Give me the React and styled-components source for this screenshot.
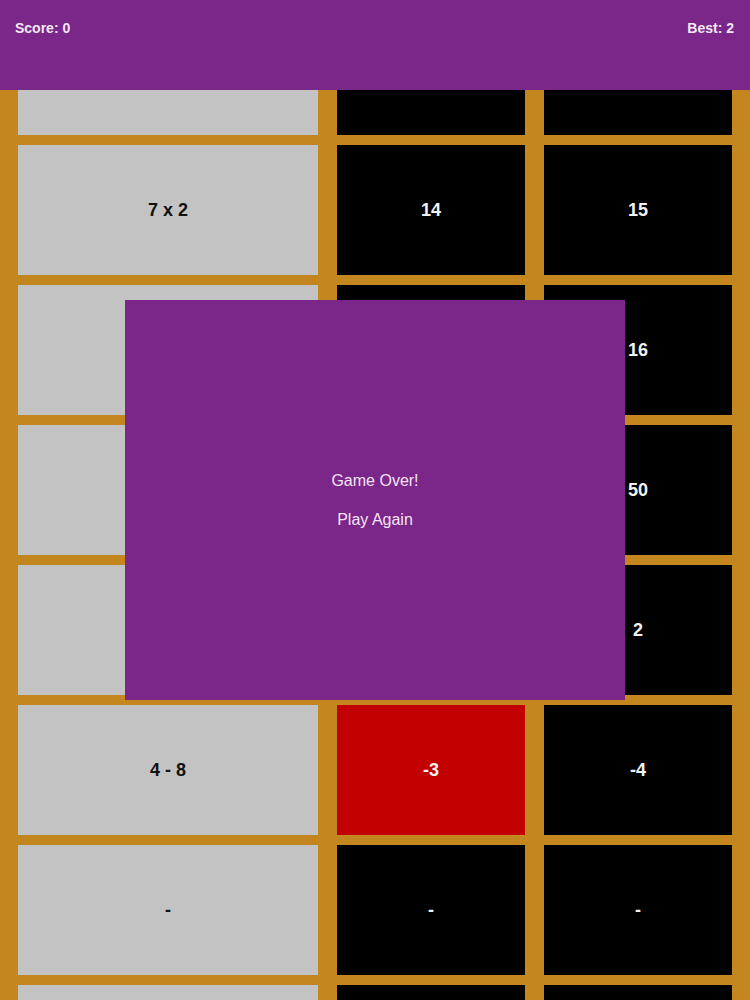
import styled, { createGlobalStyle } from "styled-components";

const GlobalStyle = createGlobalStyle`
  html, body {
    margin: 0;
    padding: 0;
    background: #c4861e;
    font-family: "Liberation Sans", Arial, sans-serif;
    overflow: hidden;
  }
`;

const rows = [
  { sum: "9 + 3", answers: ["12", "13"] },
  { sum: "7 x 2", answers: ["14", "15"] },
  { sum: "4 x 4", answers: ["18", "16"] },
  { sum: "5 x 10", answers: ["55", "50"] },
  { sum: "6 - 4", answers: ["3", "2"] },
  { sum: "4 - 8", answers: ["-3", "-4"], wrong: 0 },
  { sum: "-", answers: ["-", "-"] },
  { sum: "", answers: ["", ""] },
];

const Screen = styled.div`
  width: 750px;
  height: 1000px;
  overflow: hidden;
  position: relative;
  background: #c4861e;
`;

const Header = styled.header`
  position: absolute;
  top: 0;
  left: 0;
  right: 0;
  height: 90px;
  background: #7b2689;
  color: #f4e8f4;
  display: flex;
  justify-content: space-between;
  align-items: flex-start;
  padding: 20px 16px 0 15px;
  box-sizing: border-box;
  font-size: 14px;
  font-weight: bold;
  z-index: 2;
`;

const Board = styled.div`
  display: grid;
  grid-template-columns: 300px 188px 188px;
  grid-auto-rows: 130px;
  column-gap: 19px;
  row-gap: 10px;
  padding: 5px 18px 0 18px;
`;

const Cell = styled.div`
  display: flex;
  align-items: center;
  justify-content: center;
  font-size: 18px;
  font-weight: bold;
  background: ${(p) => (p.$kind === "sum" ? "#c3c3c3" : p.$kind === "wrong" ? "#c20000" : "#000")};
  color: ${(p) => (p.$kind === "sum" ? "#111" : "#f2f2f2")};
`;

const Modal = styled.div`
  position: absolute;
  left: 125px;
  top: 300px;
  width: 500px;
  height: 400px;
  background: #7b2689;
  color: #f4e4f4;
  display: flex;
  flex-direction: column;
  align-items: center;
  justify-content: center;
  gap: 21px;
  font-size: 16px;
  z-index: 3;
`;

const ModalLine = styled.div`
  line-height: 18px;
  cursor: ${(p) => (p.$button ? "pointer" : "default")};
`;

export default function App() {
  return (
    <Screen>
      <GlobalStyle />
      <Header>
        <span>Score: 0</span>
        <span>Best: 2</span>
      </Header>
      <Board>
        {rows.map((row, i) => [
          <Cell key={`s${i}`} $kind="sum">{row.sum}</Cell>,
          ...row.answers.map((a, j) => (
            <Cell key={`a${i}-${j}`} $kind={row.wrong === j ? "wrong" : "answer"}>
              {a}
            </Cell>
          )),
        ])}
      </Board>
      <Modal>
        <ModalLine>Game Over!</ModalLine>
        <ModalLine $button>Play Again</ModalLine>
      </Modal>
    </Screen>
  );
}
